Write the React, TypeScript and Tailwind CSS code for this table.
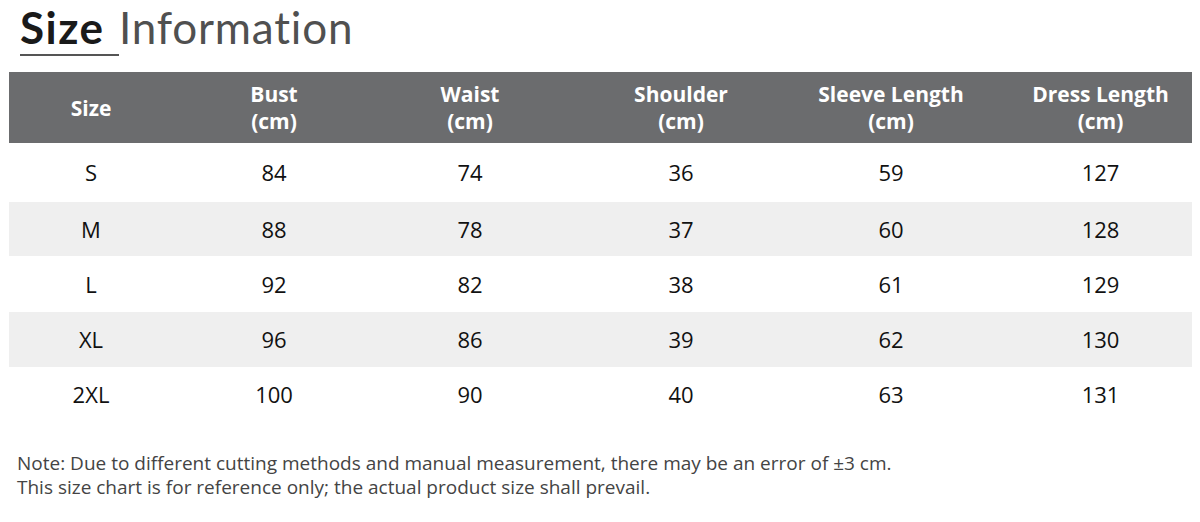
import React from 'react';

const columns = [
    { label: 'Size', unit: false, w: 'w-[164px]' },
    { label: 'Bust', unit: true, w: 'w-[202px]' },
    { label: 'Waist', unit: true, w: 'w-[190px]' },
    { label: 'Shoulder', unit: true, w: 'w-[232px]' },
    { label: 'Sleeve Length', unit: true, w: 'w-[188px]' },
    { label: 'Dress Length', unit: true, w: 'w-[207px] pl-[24px]' },
];

const rows = [
    { cells: ['S', '84', '74', '36', '59', '127'], h: 'h-[59px]', shaded: false },
    { cells: ['M', '88', '78', '37', '60', '128'], h: 'h-[54px]', shaded: true },
    { cells: ['L', '92', '82', '38', '61', '129'], h: 'h-[56px]', shaded: false },
    { cells: ['XL', '96', '86', '39', '62', '130'], h: 'h-[55px]', shaded: true },
    { cells: ['2XL', '100', '90', '40', '63', '131'], h: 'h-[55px]', shaded: false },
];

export default function App() {
    return (
        <div className="h-[522px] w-[1200px] bg-white font-['Open_Sans',sans-serif]">
            {/* Title */}
            <div className="flex items-start pl-[20px] pt-[1px] font-['Lato',sans-serif]">
                <div className="flex w-[99px] flex-col">
                    <span className="text-[44px] font-bold leading-[52px] tracking-[1.5px] text-[#1a1a1a]">Size</span>
                    <div className="mt-[1px] h-[2px] w-[99px] bg-[#555]" />
                </div>
                <span className="text-[44px] leading-[52px] tracking-[0.8px] text-[#505050]">Information</span>
            </div>

            {/* Table */}
            <div className="ml-[9px] mt-[16px] w-[1183px]">
                <div className="flex h-[71px] bg-[#6b6c6e] text-white">
                    {columns.map((c) => (
                        <div key={c.label} className={`${c.w} flex flex-col items-center justify-center pt-[1px] text-[21px] font-bold leading-[27px]`}>
                            <span>{c.label}</span>
                            {c.unit && <span>(cm)</span>}
                        </div>
                    ))}
                </div>
                {rows.map((r) => (
                    <div key={r.cells[0]} className={`flex ${r.h} ${r.shaded ? 'bg-[#efefef]' : 'bg-white'} text-[#111]`}>
                        {r.cells.map((v, i) => (
                            <div key={i} className={`${columns[i].w} flex items-center justify-center text-[22px]`}>
                                {v}
                            </div>
                        ))}
                    </div>
                ))}
            </div>

            {/* Note */}
            <div className="ml-[17px] mt-[29px] text-[19px] leading-[24px] text-[#444]">
                <p>Note: Due to different cutting methods and manual measurement, there may be an error of ±3 cm.</p>
                <p>This size chart is for reference only; the actual product size shall prevail.</p>
            </div>
        </div>
    );
}
